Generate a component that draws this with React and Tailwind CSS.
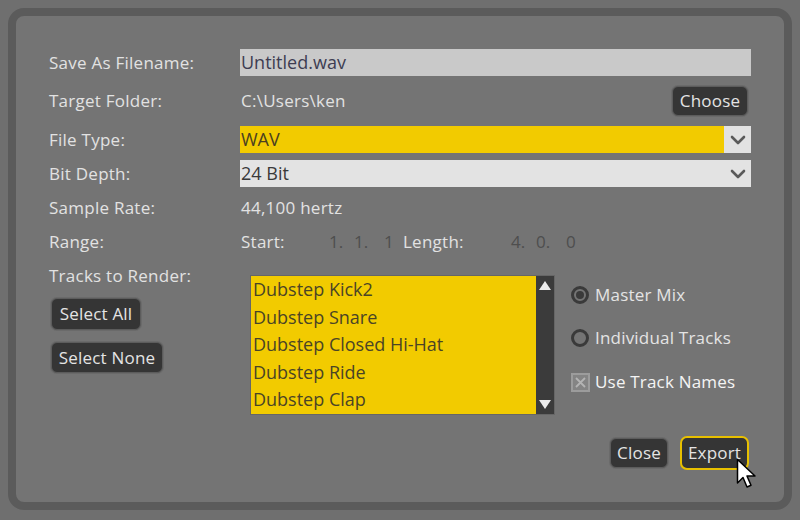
import React from "react";

const font = { fontFamily: '"Open Sans", "Noto Sans", "DejaVu Sans", sans-serif' };

function Chevron() {
  return (
    <svg width="16" height="10" viewBox="0 0 16 10">
      <path d="M2 2 L8 8 L14 2" fill="none" stroke="#5a5a5a" strokeWidth="2.6" strokeLinecap="round" strokeLinejoin="round" />
    </svg>
  );
}

function Btn({ children, className = "" }) {
  return (
    <div className={"flex items-center justify-center bg-[#353535] text-[#e4e4e4] text-[17px] tracking-[0.2px] rounded-[6px] border border-[#5c5c5c] shadow-[0_0_0_1px_#6a6a6a] " + className}>
      {children}
    </div>
  );
}

function Label({ children }) {
  return <div className="w-[191px] shrink-0 text-[17px] tracking-[0.25px] text-[#e2e2e2]">{children}</div>;
}

export default function App() {
  const tracks = ["Dubstep Kick2", "Dubstep Snare", "Dubstep Closed Hi-Hat", "Dubstep Ride", "Dubstep Clap"];
  return (
    <div className="w-[800px] h-[520px] bg-[#6f6f6f] pt-2 pl-2 pr-2 pb-[10px] overflow-hidden relative" style={font}>
      <div className="h-full border-8 border-[#5b5b5b] rounded-[16px] bg-[#747474] flex flex-col pl-[33px] pr-[33px]">
        {/* Row 1 */}
        <div className="mt-[33px] h-[27px] flex items-center">
          <Label>Save As Filename:</Label>
          <div className="flex-1 h-full bg-[#c9c9c9] flex items-center pl-[1px] text-[18px] text-[#3d3d52]">Untitled.wav</div>
        </div>
        {/* Row 2 */}
        <div className="mt-[10px] h-[30px] flex items-center">
          <Label>Target Folder:</Label>
          <div className="flex-1 text-[17px] tracking-[0.25px] text-[#e2e2e2] pl-[1px]">C:\Users\ken</div>
          <Btn className="w-[76px] h-[30px] mr-[3px]">Choose</Btn>
        </div>
        {/* Row 3 */}
        <div className="mt-[10px] h-[27px] flex items-center">
          <Label>File Type:</Label>
          <div className="flex-1 h-full flex">
            <div className="flex-1 bg-[#f2cb00] flex items-center pl-[1px] text-[18px] text-[#4a4020]">WAV</div>
            <div className="w-[27px] bg-[#e2e2e2] flex items-center justify-center">
              <Chevron />
            </div>
          </div>
        </div>
        {/* Row 4 */}
        <div className="mt-[7px] h-[27px] flex items-center">
          <Label>Bit Depth:</Label>
          <div className="flex-1 h-full bg-[#e3e3e3] flex items-center justify-between pl-[1px] pr-[5px] text-[18px] text-[#3a3a3a]">
            <span>24 Bit</span>
            <Chevron />
          </div>
        </div>
        {/* Row 5 */}
        <div className="mt-[7px] h-[28px] flex items-center">
          <Label>Sample Rate:</Label>
          <div className="text-[17px] tracking-[0.25px] text-[#e2e2e2] pl-[1px]">44,100 hertz</div>
        </div>
        {/* Row 6 */}
        <div className="mt-[6px] h-[28px] flex items-center">
          <Label>Range:</Label>
          <div className="text-[17px] tracking-[0.25px] text-[#e2e2e2] pl-[1px] w-[89px]">Start:</div>
          <div className="flex text-[17px] text-[#4e4e4e] w-[74px]">
            <span className="w-[25px]">1.</span>
            <span className="w-[30px]">1.</span>
            <span>1</span>
          </div>
          <div className="text-[17px] tracking-[0.25px] text-[#e2e2e2] w-[108px]">Length:</div>
          <div className="flex text-[17px] text-[#4e4e4e]">
            <span className="w-[25px]">4.</span>
            <span className="w-[30px]">0.</span>
            <span>0</span>
          </div>
        </div>
        {/* Bottom section */}
        <div className="mt-[6px] flex">
          <div className="w-[201px] shrink-0 flex flex-col items-start">
            <div className="h-[28px] flex items-center text-[17px] tracking-[0.25px] text-[#e2e2e2]">Tracks to Render:</div>
            <Btn className="mt-[8px] ml-[2px] w-[90px] h-[32px]">Select All</Btn>
            <Btn className="mt-[12px] ml-[2px] w-[112px] h-[31px]">Select None</Btn>
          </div>
          <div className="mt-[13px] w-[305px] h-[140px] flex border border-[#666]">
            <div className="flex-1 bg-[#e6e6e6] flex flex-col overflow-hidden">
              {tracks.map((t) => (
                <div key={t} className="h-[27.5px] shrink-0 bg-[#f2cb00] flex items-center pl-[2px] text-[18px] text-[#4a4426]">
                  {t}
                </div>
              ))}
            </div>
            <div className="w-[18px] bg-[#3b3b3b] flex flex-col items-center justify-between py-[5px]">
              <svg width="12" height="9" viewBox="0 0 12 9"><path d="M6 0 L12 9 L0 9 Z" fill="#ececec" /></svg>
              <svg width="12" height="9" viewBox="0 0 12 9"><path d="M0 0 L12 0 L6 9 Z" fill="#ececec" /></svg>
            </div>
          </div>
          <div className="ml-[16px] mt-[17px] flex flex-col">
            <div className="h-[32px] flex items-center">
              <div className="w-[18px] h-[18px] rounded-full border-[3px] border-[#3a3a3a] flex items-center justify-center">
                <div className="w-[8px] h-[8px] rounded-full bg-[#3a3a3a]" />
              </div>
              <span className="ml-[6px] text-[17px] tracking-[0.2px] text-[#e4e4e4]">Master Mix</span>
            </div>
            <div className="mt-[11px] h-[32px] flex items-center">
              <div className="w-[18px] h-[18px] rounded-full border-[3px] border-[#3a3a3a]" />
              <span className="ml-[6px] text-[17px] tracking-[0.2px] text-[#e4e4e4]">Individual Tracks</span>
            </div>
            <div className="mt-[12px] h-[32px] flex items-center">
              <div className="w-[19px] h-[19px] border-2 border-[#9c9c9c] bg-[#848484] flex items-center justify-center">
                <svg width="11" height="11" viewBox="0 0 11 11">
                  <path d="M1 1 L10 10 M10 1 L1 10" stroke="#b4b4b4" strokeWidth="1.8" />
                </svg>
              </div>
              <span className="ml-[5px] text-[17px] tracking-[0.2px] text-[#f4f4f4]">Use Track Names</span>
            </div>
          </div>
        </div>
        {/* Buttons */}
        <div className="mt-auto mb-[32px] flex justify-end items-center pr-[2px]">
          <Btn className="w-[58px] h-[30px]">Close</Btn>
          <div className="ml-[12px] w-[69px] h-[34px] flex items-center justify-center bg-[#353535] text-[#e4e4e4] text-[17px] tracking-[0.2px] rounded-[7px] border-2 border-[#e8c000]">
            Export
          </div>
        </div>
      </div>
      <svg className="absolute left-[736px] top-[458px]" width="22" height="34" viewBox="0 0 22 34">
        <path d="M1.5 1.5 L1.5 25 L7 19.5 L11 29 L15 27.3 L11 18 L19 18 Z" fill="#ffffff" stroke="#000000" strokeWidth="1.5" strokeLinejoin="round" />
      </svg>
    </div>
  );
}
